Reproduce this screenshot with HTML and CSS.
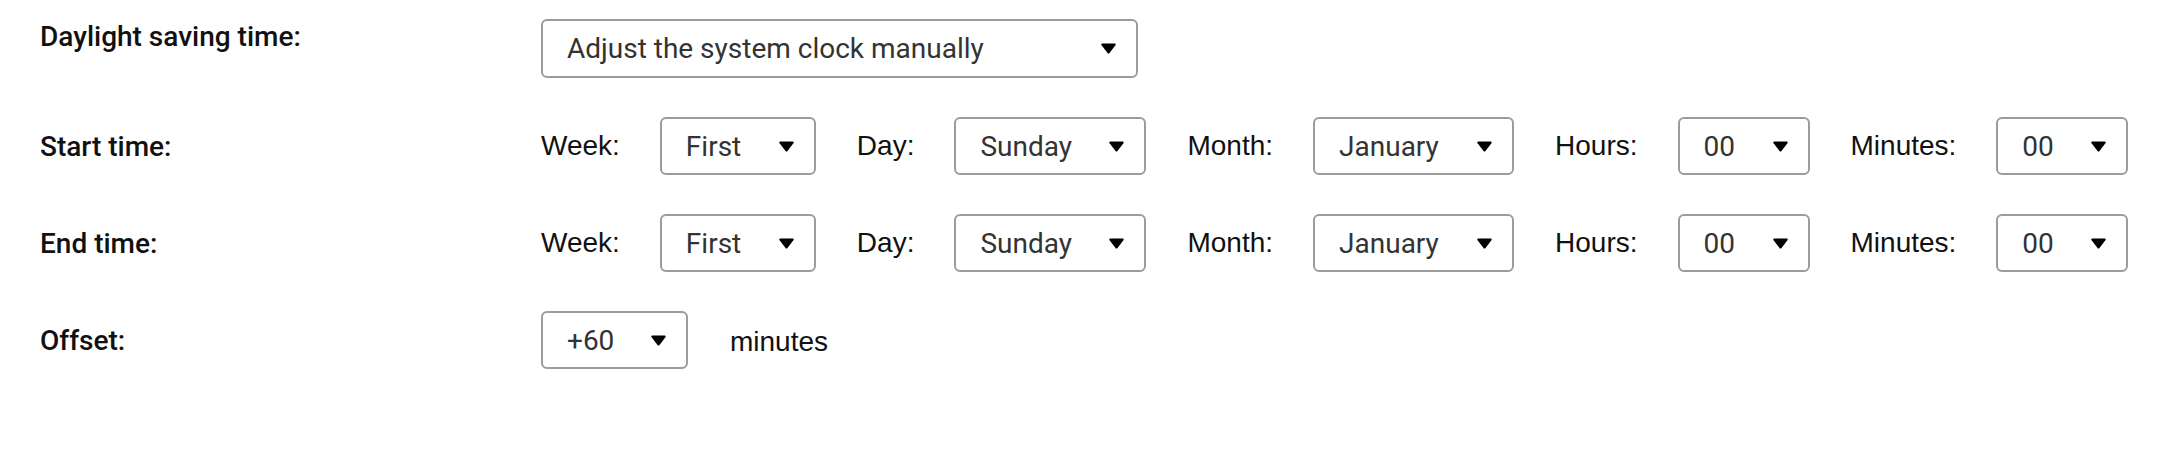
FILE: index.html
```html
<!DOCTYPE html>
<html>
<head>
<meta charset="utf-8">
<link rel="stylesheet" href="styles.css">
</head>
<body>
<div class="form">
  <div class="row-label row-label--top">Daylight saving time:</div>
  <div class="controls">
    <div class="select select--wide"><span class="value">Adjust the system clock manually</span><svg class="arrow" viewBox="0 0 15 11"><path d="M1.2 0.5h12.6c0.8 0 1.2 0.8 0.8 1.4L8.3 10.2c-0.4 0.5-1.2 0.5-1.6 0L0.4 1.9C0 1.3 0.4 0.5 1.2 0.5z"/></svg></div>
  </div>

  <div class="row-label">Start time:</div>
  <div class="controls">
    <span class="field-label">Week:</span>
    <div class="select select--week"><span class="value">First</span><svg class="arrow" viewBox="0 0 15 11"><path d="M1.2 0.5h12.6c0.8 0 1.2 0.8 0.8 1.4L8.3 10.2c-0.4 0.5-1.2 0.5-1.6 0L0.4 1.9C0 1.3 0.4 0.5 1.2 0.5z"/></svg></div>
    <span class="field-label">Day:</span>
    <div class="select select--day"><span class="value">Sunday</span><svg class="arrow" viewBox="0 0 15 11"><path d="M1.2 0.5h12.6c0.8 0 1.2 0.8 0.8 1.4L8.3 10.2c-0.4 0.5-1.2 0.5-1.6 0L0.4 1.9C0 1.3 0.4 0.5 1.2 0.5z"/></svg></div>
    <span class="field-label">Month:</span>
    <div class="select select--month"><span class="value">January</span><svg class="arrow" viewBox="0 0 15 11"><path d="M1.2 0.5h12.6c0.8 0 1.2 0.8 0.8 1.4L8.3 10.2c-0.4 0.5-1.2 0.5-1.6 0L0.4 1.9C0 1.3 0.4 0.5 1.2 0.5z"/></svg></div>
    <span class="field-label">Hours:</span>
    <div class="select select--num"><span class="value">00</span><svg class="arrow" viewBox="0 0 15 11"><path d="M1.2 0.5h12.6c0.8 0 1.2 0.8 0.8 1.4L8.3 10.2c-0.4 0.5-1.2 0.5-1.6 0L0.4 1.9C0 1.3 0.4 0.5 1.2 0.5z"/></svg></div>
    <span class="field-label">Minutes:</span>
    <div class="select select--num"><span class="value">00</span><svg class="arrow" viewBox="0 0 15 11"><path d="M1.2 0.5h12.6c0.8 0 1.2 0.8 0.8 1.4L8.3 10.2c-0.4 0.5-1.2 0.5-1.6 0L0.4 1.9C0 1.3 0.4 0.5 1.2 0.5z"/></svg></div>
  </div>

  <div class="row-label">End time:</div>
  <div class="controls">
    <span class="field-label">Week:</span>
    <div class="select select--week"><span class="value">First</span><svg class="arrow" viewBox="0 0 15 11"><path d="M1.2 0.5h12.6c0.8 0 1.2 0.8 0.8 1.4L8.3 10.2c-0.4 0.5-1.2 0.5-1.6 0L0.4 1.9C0 1.3 0.4 0.5 1.2 0.5z"/></svg></div>
    <span class="field-label">Day:</span>
    <div class="select select--day"><span class="value">Sunday</span><svg class="arrow" viewBox="0 0 15 11"><path d="M1.2 0.5h12.6c0.8 0 1.2 0.8 0.8 1.4L8.3 10.2c-0.4 0.5-1.2 0.5-1.6 0L0.4 1.9C0 1.3 0.4 0.5 1.2 0.5z"/></svg></div>
    <span class="field-label">Month:</span>
    <div class="select select--month"><span class="value">January</span><svg class="arrow" viewBox="0 0 15 11"><path d="M1.2 0.5h12.6c0.8 0 1.2 0.8 0.8 1.4L8.3 10.2c-0.4 0.5-1.2 0.5-1.6 0L0.4 1.9C0 1.3 0.4 0.5 1.2 0.5z"/></svg></div>
    <span class="field-label">Hours:</span>
    <div class="select select--num"><span class="value">00</span><svg class="arrow" viewBox="0 0 15 11"><path d="M1.2 0.5h12.6c0.8 0 1.2 0.8 0.8 1.4L8.3 10.2c-0.4 0.5-1.2 0.5-1.6 0L0.4 1.9C0 1.3 0.4 0.5 1.2 0.5z"/></svg></div>
    <span class="field-label">Minutes:</span>
    <div class="select select--num"><span class="value">00</span><svg class="arrow" viewBox="0 0 15 11"><path d="M1.2 0.5h12.6c0.8 0 1.2 0.8 0.8 1.4L8.3 10.2c-0.4 0.5-1.2 0.5-1.6 0L0.4 1.9C0 1.3 0.4 0.5 1.2 0.5z"/></svg></div>
  </div>

  <div class="row-label">Offset:</div>
  <div class="controls">
    <div class="select select--offset"><span class="value">+60</span><svg class="arrow" viewBox="0 0 15 11"><path d="M1.2 0.5h12.6c0.8 0 1.2 0.8 0.8 1.4L8.3 10.2c-0.4 0.5-1.2 0.5-1.6 0L0.4 1.9C0 1.3 0.4 0.5 1.2 0.5z"/></svg></div>
    <span class="unit">minutes</span>
  </div>
</div>
</body>
</html>
```

FILE: styles.css
```css
html, body {
  margin: 0;
  background: #ffffff;
}

.form {
  display: grid;
  grid-template-columns: 501px auto;
  row-gap: 39px;
  padding: 19px 0 0 40px;
  align-items: center;
}

.row-label {
  font-family: Roboto, "Noto Sans", sans-serif;
  font-weight: 500;
  font-size: 28px;
  color: #111;
}

.row-label--top {
  align-self: start;
  padding-top: 1px;
}

.controls {
  display: flex;
  align-items: center;
}

.field-label,
.unit {
  font-family: "Liberation Sans", Arial, sans-serif;
  font-size: 28px;
  color: #111;
  margin-right: 40px;
}

.unit {
  margin-left: 42px;
  margin-right: 0;
  padding-top: 3px;
}

.select {
  box-sizing: border-box;
  height: 58px;
  border: 2px solid #9c9c9c;
  border-radius: 6px;
  display: flex;
  align-items: center;
  justify-content: space-between;
  padding: 0 20px 0 24px;
  margin-right: 41px;
  background: #fff;
}

.controls .select:last-child {
  margin-right: 0;
}

.select--offset {
  margin-right: 0;
}

.value {
  font-family: Roboto, "Noto Sans", sans-serif;
  font-size: 28px;
  color: #333;
}

.arrow {
  width: 15px;
  height: 11px;
  fill: #000;
  flex: none;
}

.select--wide { width: 597px; height: 59px; }
.select--week { width: 156px; }
.select--day { width: 192px; }
.select--month { width: 201px; }
.select--num { width: 132px; }
.select--offset { width: 147px; }
```
